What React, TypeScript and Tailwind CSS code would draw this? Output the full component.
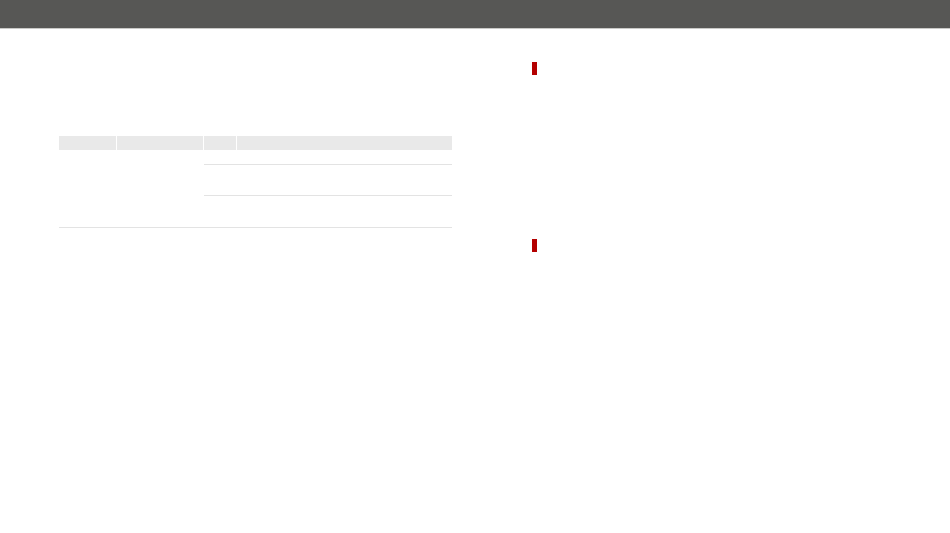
export default function App() {
  return (
    <div className="min-h-[533px] w-[950px] bg-white font-['Liberation_Sans',sans-serif]">
      <div className="h-[29px] border-b border-[#c9c9c7] bg-[#575755]" />

      <div className="flex">
        <div className="ml-[59px] mt-[107px] w-[393px]">
          <div className="flex gap-px">
            <div className="h-[14px] w-[57px] bg-[#e9e9e9]" />
            <div className="h-[14px] w-[86px] bg-[#e9e9e9]" />
            <div className="h-[14px] w-[32px] bg-[#e9e9e9]" />
            <div className="h-[14px] flex-1 bg-[#e9e9e9]" />
          </div>
          <div className="flex border-b border-[#e3e3e3]">
            <div className="w-[145px]" />
            <div className="flex-1">
              <div className="h-[15px] border-b border-[#e3e3e3]" />
              <div className="h-[31px] border-b border-[#e3e3e3]" />
              <div className="h-[31px]" />
            </div>
          </div>
        </div>

        <div className="ml-[80px] mt-[33px] flex flex-col">
          <div className="h-[13px] w-[5px] bg-[#b40000]" />
          <div className="mt-[164px] h-[13px] w-[5px] bg-[#b40000]" />
        </div>
      </div>
    </div>
  );
}
